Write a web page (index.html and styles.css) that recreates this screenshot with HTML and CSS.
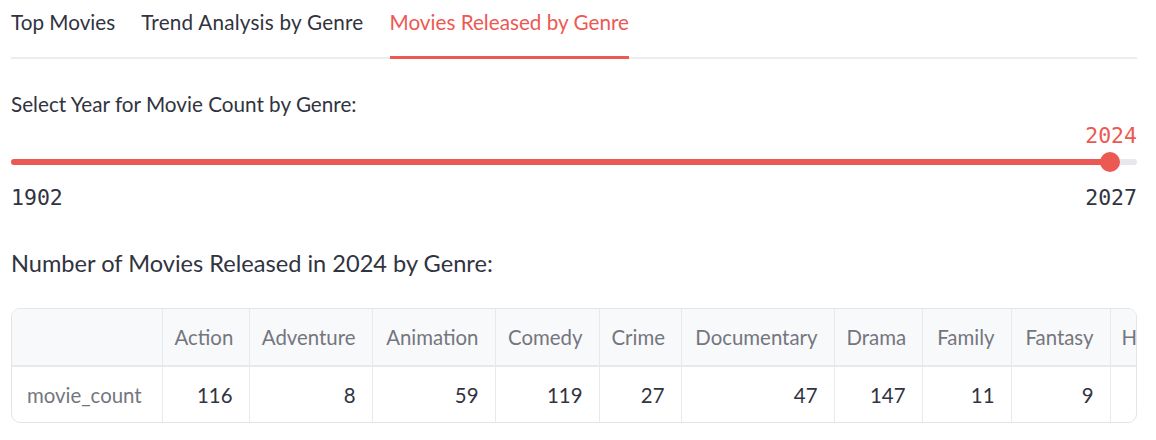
FILE: index.html
```html
<!DOCTYPE html>
<html>
<head>
<meta charset="utf-8">
<link rel="stylesheet" href="styles.css">
</head>
<body>
<div class="page">
  <div class="tabs">
    <div class="tab">Top Movies</div>
    <div class="tab tab-trend">Trend Analysis by Genre</div>
    <div class="tab active">Movies Released by Genre</div>
  </div>

  <div class="label">Select Year for Movie Count by Genre:</div>

  <div class="slider">
    <div class="value-row"><span class="value">2024</span></div>
    <div class="track">
      <div class="fill" style="width: 97.6%"><span class="thumb"></span></div>
    </div>
    <div class="range"><span>1902</span><span>2027</span></div>
  </div>

  <div class="heading">Number of Movies Released in 2024 by Genre:</div>

  <div class="grid">
    <table>
      <colgroup>
        <col style="width:150px">
        <col style="width:87px">
        <col style="width:123px">
        <col style="width:123px">
        <col style="width:104px">
        <col style="width:82px">
        <col style="width:153px">
        <col style="width:88px">
        <col style="width:89px">
        <col style="width:99px">
        <col style="width:80px">
      </colgroup>
      <thead>
        <tr>
          <th class="idx"></th>
          <th>Action</th>
          <th>Adventure</th>
          <th>Animation</th>
          <th>Comedy</th>
          <th>Crime</th>
          <th>Documentary</th>
          <th>Drama</th>
          <th>Family</th>
          <th>Fantasy</th>
          <th class="cut">H</th>
        </tr>
      </thead>
      <tbody>
        <tr>
          <td class="idx">movie_count</td>
          <td>116</td>
          <td>8</td>
          <td>59</td>
          <td>119</td>
          <td>27</td>
          <td>47</td>
          <td>147</td>
          <td>11</td>
          <td>9</td>
          <td class="cut"></td>
        </tr>
      </tbody>
    </table>
  </div>
</div>
</body>
</html>
```

FILE: styles.css
```css
* { box-sizing: border-box; }

html, body {
  margin: 0;
  padding: 0;
  background: #ffffff;
}

body {
  font-family: "Source Sans Pro", "Lato", "Noto Sans", sans-serif;
  color: #31333f;
}

.page {
  padding: 0 19px 0 11px;
  display: flex;
  flex-direction: column;
}

/* Tabs */
.tabs {
  display: flex;
  gap: 26px;
  height: 59px;
  border-bottom: 2px solid #ececee;
}

.tab {
  position: relative;
  font-size: 20.7px;
  line-height: 44px;
  color: #31333f;
  white-space: nowrap;
}

.tab-trend {
  letter-spacing: 0.22px;
}

.tab.active {
  color: #ec5953;
}

.tab.active::after {
  content: "";
  position: absolute;
  left: 0;
  right: 0;
  bottom: -2px;
  height: 3px;
  background: #ec5953;
}

/* Label */
.label {
  margin-top: 32px;
  font-size: 20.7px;
  line-height: 26px;
}

/* Slider */
.slider {
  display: flex;
  flex-direction: column;
}

.value-row {
  display: flex;
  justify-content: flex-end;
  margin-top: 7px;
}

.value, .range span {
  font-family: "DejaVu Sans Mono", "Liberation Mono", monospace;
  font-size: 21.5px;
  line-height: 24px;
}

.value {
  color: #ec5953;
}

.track {
  margin-top: 11px;
  height: 6px;
  border-radius: 3px;
  background: #e6e8ee;
  display: flex;
}

.fill {
  position: relative;
  height: 6px;
  border-radius: 3px;
  background: #ec5953;
}

.thumb {
  position: absolute;
  right: -10px;
  top: -7px;
  width: 20px;
  height: 20px;
  border-radius: 50%;
  background: #ec5953;
}

.range {
  display: flex;
  justify-content: space-between;
  margin-top: 21px;
  color: #31333f;
}

/* Heading */
.heading {
  margin-top: 38px;
  font-size: 23.6px;
  line-height: 30px;
}

/* Data grid */
.grid {
  margin-top: 30px;
  height: 115px;
  border: 1px solid #e4e5e9;
  border-radius: 9px;
  overflow: hidden;
}

table {
  border-collapse: collapse;
  table-layout: fixed;
  width: 1178px;
  font-size: 20.4px;
}

th, td {
  border-left: 1px solid #e8e9ec;
  padding: 0 16px 0 12px;
  text-align: right;
  white-space: nowrap;
  overflow: hidden;
}

th:first-child, td:first-child {
  border-left: none;
}

thead tr {
  height: 57px;
  background: #f8f9fb;
}

th {
  font-weight: 400;
  color: #74767e;
  border-bottom: 2px solid #e8e9ec;
}

th.cut {
  text-align: left;
  padding-left: 11px;
}

tbody tr {
  height: 56px;
}

td {
  color: #31333f;
}

td.idx {
  text-align: left;
  padding-left: 15px;
  color: #74767e;
}
```
